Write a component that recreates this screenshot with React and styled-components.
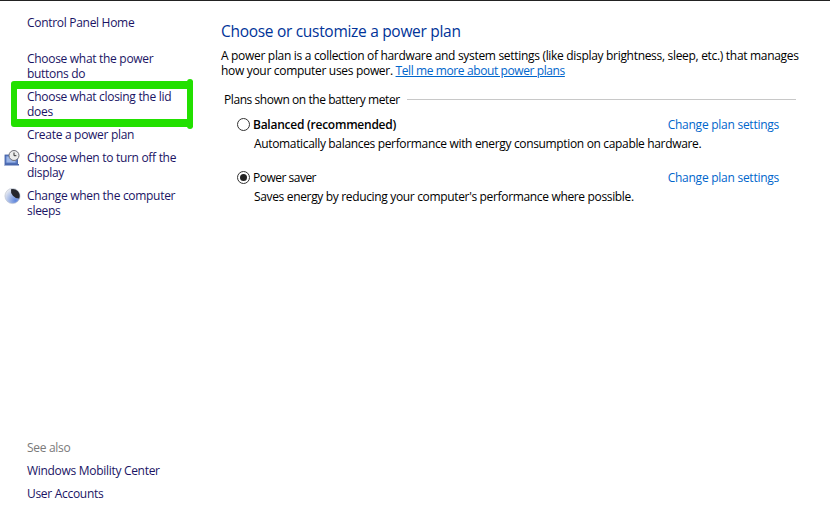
import React from 'react'
import styled, { createGlobalStyle } from 'styled-components'

const GlobalStyle = createGlobalStyle`
	html, body {
		margin: 0;
		padding: 0;
		background: #fff;
	}
	body {
		font-family: "Open Sans", "Noto Sans", sans-serif;
		font-size: 12px;
		line-height: 15px;
		color: #000;
	}
`

const Page = styled.div`
	position: relative;
	display: flex;
	width: 830px;
	height: 516px;
	overflow: hidden;
	border-top: 1px solid #222;
	box-sizing: border-box;
`

const Sidebar = styled.aside`
	display: flex;
	flex-direction: column;
	width: 221px;
	flex: none;
	padding: 14px 20px 15px 27px;
	box-sizing: border-box;
`

const NavList = styled.nav`
	display: flex;
	flex-direction: column;
	gap: 8px;
	margin-top: ${p => p.$top || 0};
`

const NavItem = styled.a`
	position: relative;
	display: block;
	color: #1a1464;
	letter-spacing: -0.3px;
	width: 156px;
`

const NavIcon = styled.svg`
	position: absolute;
	left: -23px;
	top: 0;
	width: 17px;
	height: 17px;
`

const Footer = styled.div`
	display: flex;
	flex-direction: column;
	gap: 8px;
	margin-top: auto;
`

const SeeAlso = styled.div`
	color: #7a7a7a;
	letter-spacing: -0.3px;
`

const Main = styled.main`
	flex: 1;
	min-width: 0;
	padding: 20px 34px 0 0;
`

const Title = styled.h1`
	margin: 0;
	font-size: 15.5px;
	line-height: 20px;
	font-weight: 400;
	color: #003399;
	letter-spacing: -0.3px;
`

const Intro = styled.p`
	margin: 7px 0 0;
	width: 585px;
	letter-spacing: -0.31px;
`

const Link = styled.a`
	color: #0066cc;
	letter-spacing: ${p => (p.$under ? '-0.4px' : '-0.26px')};
	text-decoration: ${p => (p.$under ? 'underline' : 'none')};
`

const GroupHead = styled.div`
	display: flex;
	align-items: center;
	gap: 7px;
	margin: 14px 0 0 3px;
	letter-spacing: -0.43px;
	&::after {
		content: '';
		flex: 1;
		height: 1px;
		background: #c8c8c8;
	}
`

const PlanList = styled.div`
	display: flex;
	flex-direction: column;
	gap: 19px;
	margin: 10px 17px 0 16px;
`

const Plan = styled.div`
	display: flex;
	flex-direction: column;
	gap: 4px;
`

const PlanRow = styled.div`
	display: flex;
	align-items: center;
	justify-content: space-between;
`

const PlanName = styled.label`
	display: flex;
	align-items: center;
	gap: 3px;
	font-weight: ${p => (p.$bold ? 600 : 400)};
	letter-spacing: ${p => (p.$bold ? '-0.25px' : '-0.5px')};
`

const Radio = styled.span`
	display: grid;
	place-items: center;
	width: 13px;
	height: 13px;
	box-sizing: border-box;
	border: 1px solid #333;
	border-radius: 50%;
	&::after {
		content: '';
		display: ${p => (p.$on ? 'block' : 'none')};
		width: 7px;
		height: 7px;
		border-radius: 50%;
		background: #222;
	}
`

const PlanDesc = styled.div`
	margin-left: 17px;
	letter-spacing: -0.34px;
`

const Highlight = styled.div`
	position: absolute;
	left: 11px;
	top: 80px;
	width: 182px;
	height: 46px;
	box-sizing: border-box;
	border: solid #22e000;
	border-width: 8px 6px;
	border-radius: 3px 0 0 3px;
	pointer-events: none;
	&::after {
		content: '';
		position: absolute;
		top: -10px;
		bottom: -10px;
		right: -6px;
		width: 6px;
		border-radius: 3px;
		background: #22e000;
	}
`

const DisplayIcon = () => (
	<NavIcon viewBox="0 0 17 17">
		<rect x="1" y="5" width="12.5" height="9" fill="#5b7cc6" stroke="#3d5a9e" strokeWidth=".8" />
		<rect x="2.5" y="6.5" width="9" height="6" fill="#9db6e6" />
		<path d="M1 14h14v1.5H0z" fill="#4a68ad" />
		<circle cx="10" cy="5.5" r="5" fill="#ececec" stroke="#6f6f78" />
		<path d="M10 2.5v3.2h2.4" fill="none" stroke="#333" strokeWidth="1" />
	</NavIcon>
)

const SleepIcon = () => (
	<NavIcon viewBox="0 0 17 17">
		<defs>
			<radialGradient id="moon" cx=".7" cy=".8" r=".8">
				<stop offset="0" stopColor="#5f86dc" />
				<stop offset="1" stopColor="#e4e8f0" />
			</radialGradient>
		</defs>
		<circle cx="8.5" cy="8" r="7.6" fill="url(#moon)" stroke="#b9bfcc" strokeWidth=".6" />
		<path d="M7 1.2A7 7 0 0 1 15.2 10.5A8 8 0 0 1 7 1.2z" fill="#26272e" />
	</NavIcon>
)

const plans = [
	{ name: 'Balanced (recommended)', desc: 'Automatically balances performance with energy consumption on capable hardware.', bold: true },
	{ name: 'Power saver', desc: "Saves energy by reducing your computer's performance where possible.", on: true },
]

const App = () => {
	return (
		<>
			<GlobalStyle />
			<Page>
				<Sidebar>
					<NavItem>Control Panel Home</NavItem>
					<NavList $top="21px">
						<NavItem>Choose what the power buttons do</NavItem>
						<NavItem>Choose what closing the lid does</NavItem>
						<NavItem>Create a power plan</NavItem>
						<NavItem><DisplayIcon />Choose when to turn off the display</NavItem>
						<NavItem><SleepIcon />Change when the computer sleeps</NavItem>
					</NavList>
					<Footer>
						<SeeAlso>See also</SeeAlso>
						<NavItem>Windows Mobility Center</NavItem>
						<NavItem>User Accounts</NavItem>
					</Footer>
				</Sidebar>
				<Main>
					<Title>Choose or customize a power plan</Title>
					<Intro>
						A power plan is a collection of hardware and system settings (like display brightness, sleep, etc.) that manages how your computer uses power. <Link $under>Tell me more about power plans</Link>
					</Intro>
					<GroupHead>Plans shown on the battery meter</GroupHead>
					<PlanList>
						{plans.map(plan => (
							<Plan key={plan.name}>
								<PlanRow>
									<PlanName $bold={plan.bold}>
										<Radio $on={plan.on} />
										{plan.name}
									</PlanName>
									<Link>Change plan settings</Link>
								</PlanRow>
								<PlanDesc>{plan.desc}</PlanDesc>
							</Plan>
						))}
					</PlanList>
				</Main>
				<Highlight />
			</Page>
		</>
	)
}

export default App
